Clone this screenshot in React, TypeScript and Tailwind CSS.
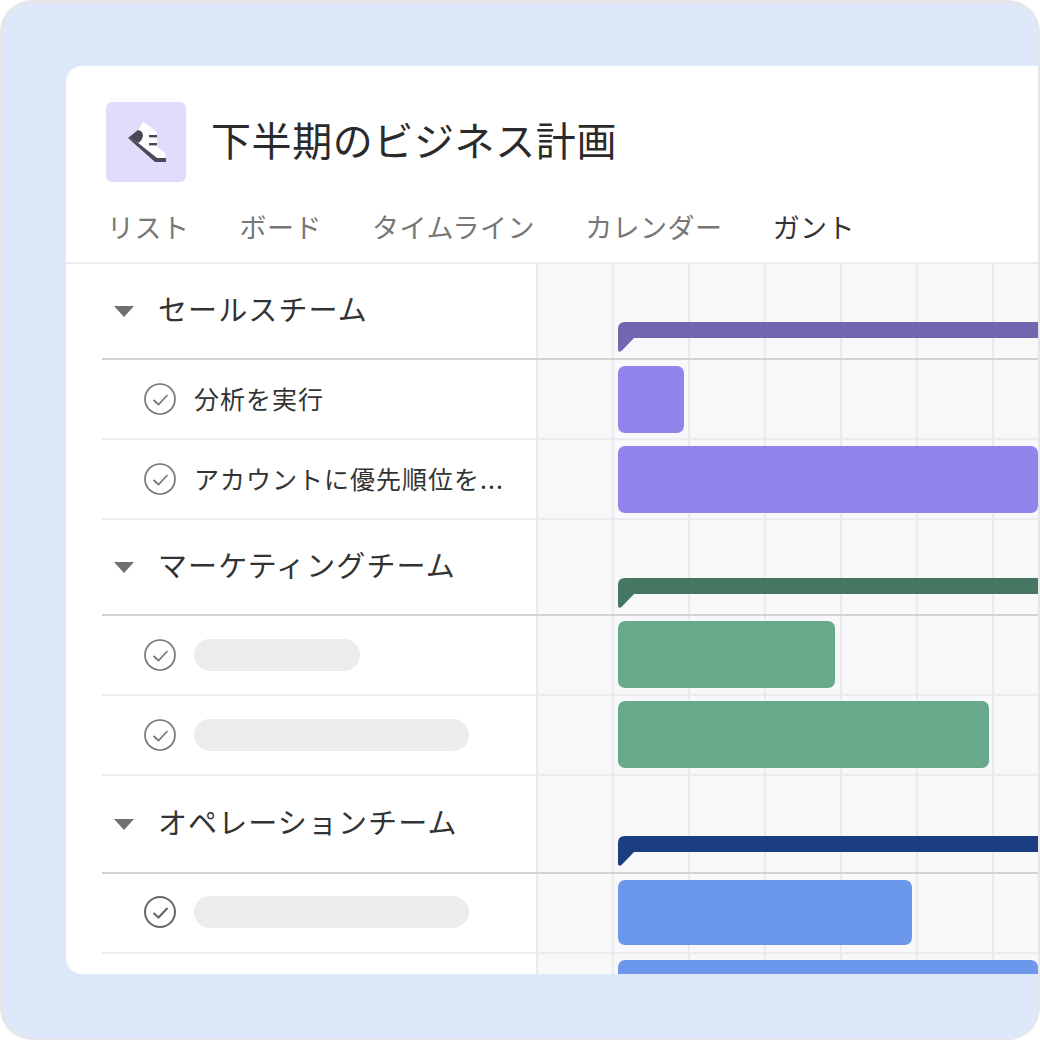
const jp = "font-['Noto_Sans_CJK_JP','Noto_Sans',sans-serif]";

const tabs = ['リスト', 'ボード', 'タイムライン', 'カレンダー', 'ガント'];

function ShoeIcon() {
  return (
    <svg width="80" height="80" viewBox="-14 -8 80 80">
      <path d="M23 12 L28 15 L37 22 L37 37 L45 43 L46 48 L37 48 L18 32 L23 25 L18 20 Z" fill="#ffffff" />
      <path d="M8 28 L18 20 Q23 21 23 26 Q22 31 18 33 Z" fill="#4a4858" />
      <path d="M8 28 L18 33 L37 48 L46 48 L46 52 L35 52 Z" fill="#4a4858" />
      <rect x="29" y="25" width="8" height="2.4" fill="#4a4858" />
      <rect x="29" y="33" width="8" height="2.4" fill="#4a4858" />
    </svg>
  );
}

function Check({ dark }: { dark?: boolean }) {
  const c = dark ? '#666666' : '#767676';
  return (
    <svg width="32" height="32" viewBox="0 0 32 32" fill="none" className="shrink-0">
      <circle cx="16" cy="16" r="15" stroke={c} strokeWidth={dark ? 2 : 1.7} />
      <path d="M9.5 17 L14.5 21.5 L23.5 12" stroke={c} strokeWidth={dark ? 2.2 : 1.7} />
    </svg>
  );
}

function Caret() {
  return (
    <svg width="20" height="11" viewBox="0 0 20 11" className="shrink-0">
      <path d="M0 0 H20 L10 11 Z" fill="#707070" />
    </svg>
  );
}

// summary bar with the little notch hanging off its left end
function SummaryBar({ color }: { color: string }) {
  return (
    <svg width="420" height="30" viewBox="0 0 420 30" className="absolute left-[82px] bottom-[6px]">
      <path d="M0 7 Q0 0 7 0 H420 V16 H16 L3.5 29 Q0 31 0 27 Z" fill={color} />
    </svg>
  );
}

function GridCells() {
  return (
    <div className="flex h-full">
      {[0, 1, 2, 3, 4, 5, 6].map(i => (
        <div key={i} className="w-[76px] shrink-0 h-full border-l-2 border-[#ebebec]" />
      ))}
    </div>
  );
}

function Section({ title, color, height }: { title: string; color: string; height: number }) {
  return (
    <div className="flex shrink-0" style={{ height }}>
      <div className="w-[434px] shrink-0 ml-[36px] border-b-2 border-[#d2d2d3] flex items-center pl-[12px]">
        <Caret />
        <span className={`${jp} ml-[24px] text-[29px] tracking-[1.1px] text-[#333333] leading-none whitespace-nowrap -translate-y-[3px]`}>{title}</span>
      </div>
      <div className="relative flex-1 min-w-0 overflow-hidden bg-[#f8f8fa] border-b-2 border-[#d2d2d3]">
        <GridCells />
        <SummaryBar color={color} />
      </div>
    </div>
  );
}

type RowProps = { text?: string; pill?: number; bar: number; barColor: string; top: number; barHeight?: number; dark?: boolean };

function Row({ text, pill, bar, barColor, top, barHeight = 67, dark }: RowProps) {
  return (
    <div className="flex h-[80px] shrink-0">
      <div className={`w-[434px] shrink-0 ml-[36px] border-b-2 border-[#ececee] flex items-center pl-[42px] ${dark ? 'pb-[2px]' : ''}`}>
        <Check dark={dark} />
        {text && <span className={`${jp} ml-[19px] text-[25px] tracking-[1px] text-[#333333] leading-none whitespace-nowrap -translate-x-[1px] -translate-y-[1px]`}>{text}</span>}
        {pill && <div className="ml-[18px] h-[32px] rounded-full bg-[#ececec]" style={{ width: pill }} />}
      </div>
      <div className="relative flex-1 min-w-0 overflow-hidden bg-[#f8f8fa] border-b-2 border-[#ececee]">
        <GridCells />
        <div className="absolute left-[82px] rounded-[7px]" style={{ top, height: barHeight, width: bar, background: barColor }} />
      </div>
    </div>
  );
}

export default function App() {
  return (
    <div className="w-[1040px] h-[1040px] bg-white overflow-hidden">
      <div className="w-full h-full rounded-[32px] border-solid border-t-4 border-l-[3px] border-r-2 border-b-2 border-[#e6e6ea] bg-[#dde8fa] pt-[62px] pl-[63px] overflow-hidden">
        <div className="w-[972px] h-[908px] bg-white rounded-l-[16px] overflow-hidden flex flex-col">
          <div className="flex items-center h-[116px] pl-[40px] pt-[36px] shrink-0">
            <div className="w-[80px] h-[80px] rounded-[6px] bg-[#e0dcfb]">
              <ShoeIcon />
            </div>
            <h1 className={`${jp} ml-[25px] text-[40px] tracking-[0.6px] font-normal text-[#2a2a2a] leading-none whitespace-nowrap -translate-y-[3px]`}>下半期のビジネス計画</h1>
          </div>
          <div className="flex gap-[50px] h-[82px] pl-[41px] pt-[27px] border-b-2 border-[#ececee] shrink-0">
            {tabs.map((t, i) => (
              <span key={t} className={`${jp} text-[27px] tracking-[0.5px] leading-[36px] whitespace-nowrap ${i === 4 ? 'text-[#333333]' : 'text-[#777777]'}`}>{t}</span>
            ))}
          </div>
          <Section title="セールスチーム" color="#7166b0" height={96} />
          <Row text="分析を実行" bar={66} barColor="#9085ea" top={6} />
          <Row text="アカウントに優先順位を..." bar={420} barColor="#9085ea" top={6} />
          <Section title="マーケティングチーム" color="#457763" height={96} />
          <Row pill={166} bar={217} barColor="#68a98c" top={5} />
          <Row pill={275} bar={371} barColor="#68a98c" top={5} />
          <Section title="オペレーションチーム" color="#1b3d82" height={98} />
          <Row pill={275} bar={294} barColor="#6c98ec" top={6} barHeight={65} dark />
          <Row bar={420} barColor="#6c98ec" top={6} />
        </div>
      </div>
    </div>
  );
}
